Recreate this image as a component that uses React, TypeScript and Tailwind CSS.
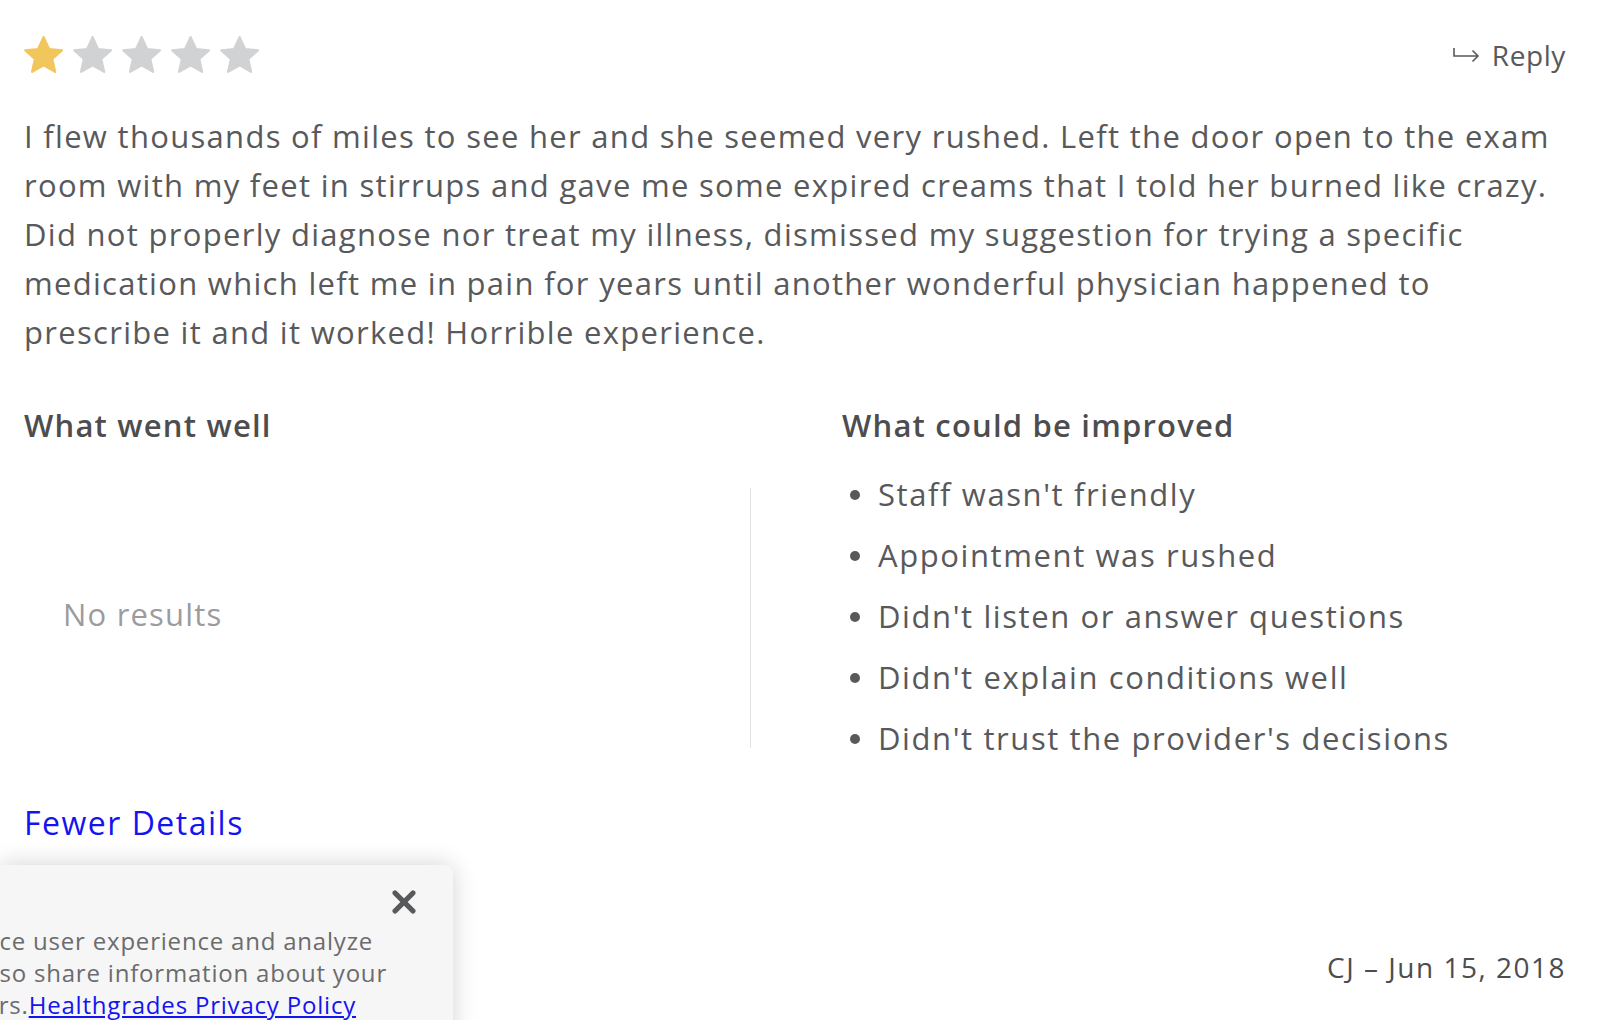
import { X } from "lucide-react";

const improved = [
  "Staff wasn't friendly",
  "Appointment was rushed",
  "Didn't listen or answer questions",
  "Didn't explain conditions well",
  "Didn't trust the provider's decisions",
];

const Star = ({ filled }: { filled: boolean }) => (
  <svg width="39" height="39" viewBox="1.6 1.6 20.7 20.7">
    <path
      d="M12 2.2l2.9 6.3 6.8.7-5.1 4.6 1.5 6.8L12 17.1l-6.1 3.5 1.5-6.8-5.1-4.6 6.8-.7z"
      fill={filled ? "#f1c65c" : "#d1d2d4"}
      stroke={filled ? "#f1c65c" : "#d1d2d4"}
      strokeWidth="1.2"
      strokeLinejoin="round"
    />
  </svg>
);

const ReplyArrow = () => (
  <svg width="28" height="18" viewBox="0 0 28 18" fill="none" stroke="#58595b" strokeWidth="1.6">
    <path d="M2 2v8h24" />
    <path d="M20.5 4.5L26 10l-5.5 5.5" />
  </svg>
);

const App = () => {
  return (
    <div className="relative h-[1020px] overflow-hidden bg-white font-['Open_Sans',sans-serif] text-[#58595b]">
      <div className="pl-6 pr-[34px] pt-[34px]">
        <div className="flex items-center justify-between">
          <div className="flex gap-[10px]">
            {[0, 1, 2, 3, 4].map((i) => (
              <Star key={i} filled={i === 0} />
            ))}
          </div>
          <button className="flex items-center gap-[12px] text-[28px] tracking-[0.6px] text-[#58595b]">
            <ReplyArrow />
            Reply
          </button>
        </div>

        <p className="mt-[36px] text-[31px] leading-[49px] tracking-[1.3px]">
          I flew thousands of miles to see her and she seemed very rushed. Left the door open to the exam
          room with my feet in stirrups and gave me some expired creams that I told her burned like crazy.
          Did not properly diagnose nor treat my illness, dismissed my suggestion for trying a specific
          medication which left me in pain for years until another wonderful physician happened to
          prescribe it and it worked! Horrible experience.
        </p>

        <div className="mt-[48px] grid grid-cols-[818px_1fr]">
          <div>
            <h3 className="text-[31px] font-semibold leading-[40px] tracking-[1.2px] text-[#4d4d4f]">
              What went well
            </h3>
            <div className="mt-[43px] flex h-[260px] w-[727px] items-center border-r border-[#e3e3e3] pb-[8px] pl-[39px]">
              <span className="text-[31px] tracking-[1.2px] text-[#9b9ba0]">No results</span>
            </div>
          </div>
          <div>
            <h3 className="text-[31px] font-semibold leading-[40px] tracking-[1.2px] text-[#4d4d4f]">
              What could be improved
            </h3>
            <ul className="mt-[29px] flex flex-col gap-[20px]">
              {improved.map((item) => (
                <li key={item} className="flex items-center gap-[18px] text-[31px] leading-[41px] tracking-[1.6px]">
                  <span className="ml-[8px] h-[10px] w-[10px] rounded-full bg-[#58595b]" />
                  {item}
                </li>
              ))}
            </ul>
          </div>
        </div>

        <a href="#" className="mt-[44px] block w-fit text-[32px] leading-[40px] tracking-[1.5px] text-[#1414f0]">
          Fewer Details
        </a>

        <div className="mt-[103px] text-right text-[28px] tracking-[1.5px] text-[#4d4d4f]">
          CJ – Jun 15, 2018
        </div>
      </div>

      <div className="absolute bottom-[-20px] left-0 h-[175px] w-[453px] overflow-hidden rounded-tr-[8px] bg-[#f6f6f6] shadow-[0_0_24px_rgba(0,0,0,0.18)]">
        <button className="absolute right-[31px] top-[19px] text-[#58595b]">
          <X size={36} strokeWidth={3.5} />
        </button>
        <div className="mt-[60px] flex flex-col items-end whitespace-nowrap pr-[66px] text-[24px] leading-[32px] tracking-[0.8px] text-[#6b6b6d]">
          <div className="pr-[14px]">This website uses cookies to enhance user experience and analyze</div>
          <div>performance and traffic on our website. We also share information about your</div>
          <div className="pr-[31px]">
            use of our site with our social media, advertising and analytics partners.
            <a href="#" className="text-[#1414f0] underline">Healthgrades Privacy Policy</a>
          </div>
        </div>
      </div>
    </div>
  );
};

export default App;
